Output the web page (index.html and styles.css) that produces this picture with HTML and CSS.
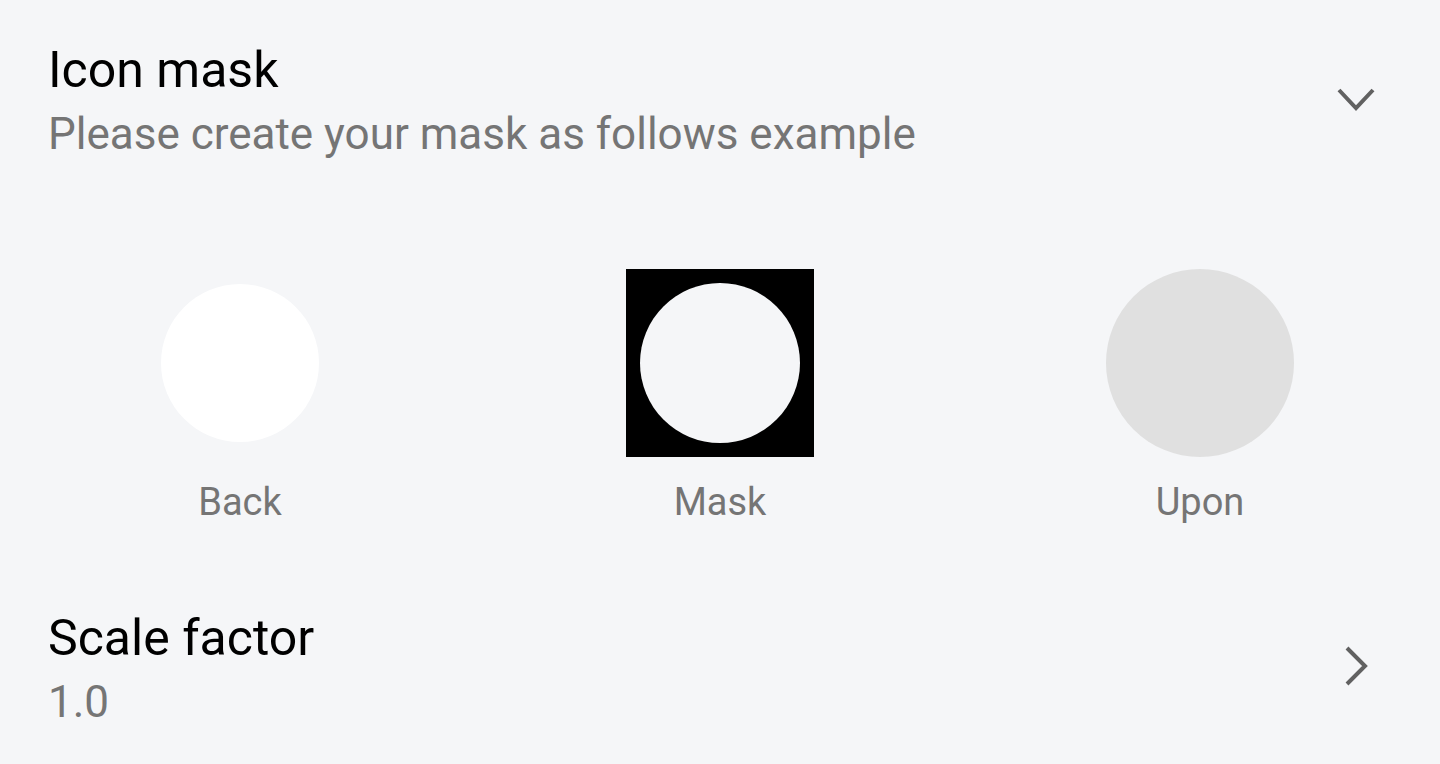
FILE: index.html
```html
<!DOCTYPE html>
<html lang="en">
<head>
  <meta charset="UTF-8">
  <meta name="viewport" content="width=device-width, initial-scale=1.0">
  <title>Icon mask</title>
  <link rel="stylesheet" href="styles.css">
</head>
<body>
  <main>
    <div class="pref">
      <div class="pref-text">
        <div class="pref-title">Icon mask</div>
        <div class="pref-summary">Please create your mask as follows example</div>
      </div>
      <svg class="chevron-down" width="40" height="26" viewBox="0 0 40 26">
        <polyline points="3,3 20,21 37,3" fill="none" stroke="#616161" stroke-width="4"/>
      </svg>
    </div>

    <div class="example">
      <div class="example-item">
        <div class="shape-box">
          <div class="back"></div>
        </div>
        <div class="example-label">Back</div>
      </div>
      <div class="example-item">
        <div class="shape-box">
          <div class="mask"><div class="mask-hole"></div></div>
        </div>
        <div class="example-label">Mask</div>
      </div>
      <div class="example-item">
        <div class="shape-box">
          <div class="upon"></div>
        </div>
        <div class="example-label">Upon</div>
      </div>
    </div>

    <div class="pref">
      <div class="pref-text">
        <div class="pref-title">Scale factor</div>
        <div class="pref-summary">1.0</div>
      </div>
      <svg class="chevron-right" width="26" height="42" viewBox="0 0 26 42">
        <polyline points="3,3 21,21 3,39" fill="none" stroke="#616161" stroke-width="4"/>
      </svg>
    </div>
  </main>
</body>
</html>
```

FILE: styles.css
```css
* {
  box-sizing: border-box;
}

body {
  font-family: Roboto, "Noto Sans", sans-serif;
  background-color: #f5f6f8;
  margin: 0;
}

main {
  width: 1440px;
  height: 764px;
  overflow: hidden;
}

.pref {
  display: flex;
  align-items: center;
  padding: 0 64px 0 48px;
}

.pref-text {
  flex: 1;
}

.pref-title {
  font-size: 50px;
  color: #000;
  line-height: 60px;
}

.pref-summary {
  font-size: 44px;
  color: #757575;
  line-height: 56px;
  margin-top: 6px;
}

.pref:first-child {
  padding-top: 40px;
}

.chevron-down {
  margin-top: -3px;
}

.example {
  display: grid;
  grid-template-columns: repeat(3, 1fr);
  margin-top: 107px;
}

.example-item {
  display: flex;
  flex-direction: column;
  align-items: center;
}

.shape-box {
  width: 188px;
  height: 188px;
  display: flex;
  align-items: center;
  justify-content: center;
}

.back {
  width: 158px;
  height: 158px;
  border-radius: 50%;
  background-color: #fff;
}

.mask {
  width: 188px;
  height: 188px;
  background-color: #000;
  display: flex;
  align-items: center;
  justify-content: center;
}

.mask-hole {
  width: 160px;
  height: 160px;
  border-radius: 50%;
  background-color: #f5f6f8;
}

.upon {
  width: 188px;
  height: 188px;
  border-radius: 50%;
  background-color: #e0e0e0;
}

.example-label {
  font-size: 38px;
  color: #757575;
  margin-top: 23px;
}

.example + .pref {
  margin-top: 84px;
}

.chevron-right {
  margin-top: -7px;
  margin-right: 6px;
}
```
